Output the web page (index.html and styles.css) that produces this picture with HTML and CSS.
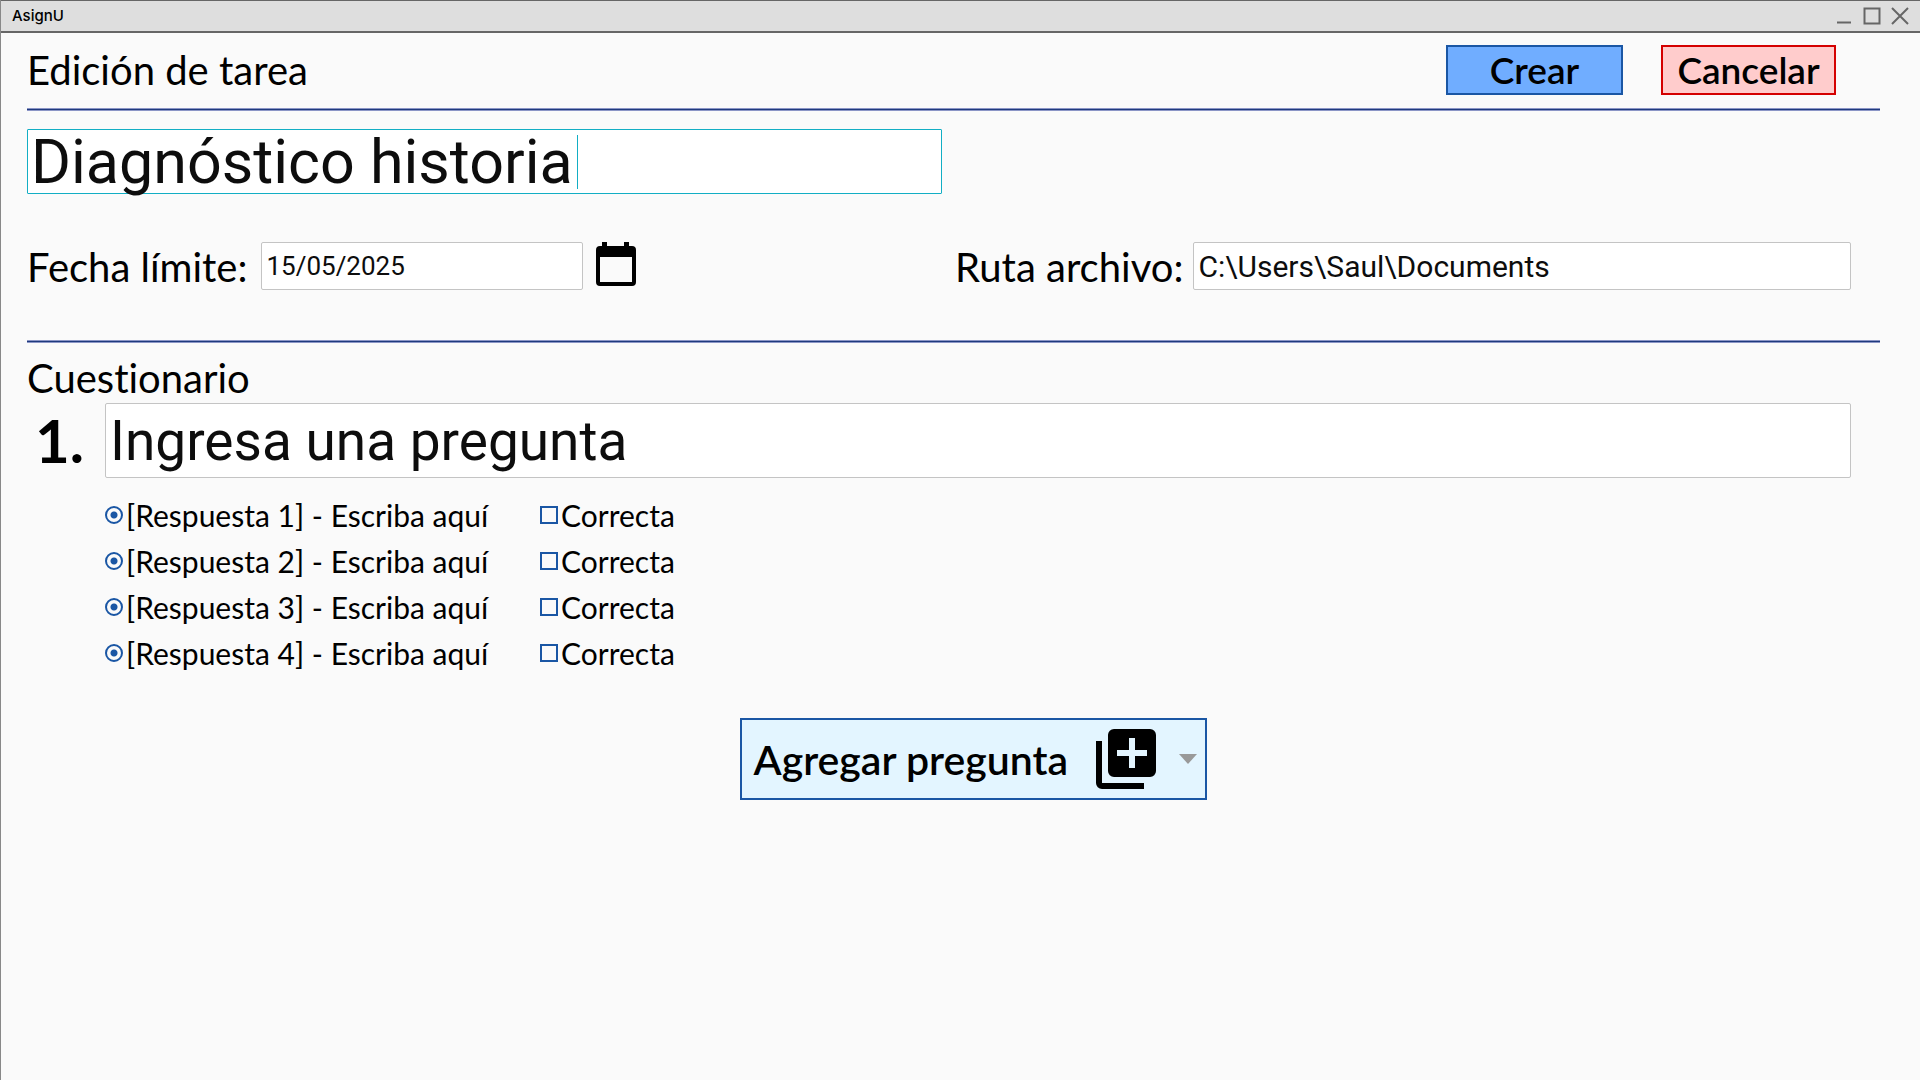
FILE: index.html
```html
<!DOCTYPE html>
<html lang="es">
<head>
<meta charset="utf-8">
<meta name="viewport" content="width=device-width, initial-scale=1">
<title>AsignU</title>
<link rel="stylesheet" href="styles.css">
</head>
<body>
<div class="window">
  <div class="titlebar">
    <span class="app-name">AsignU</span>
    <div class="window-controls">
      <button type="button" class="window-button" aria-label="Minimizar"><svg viewBox="0 0 18 18"><path d="M2 15.5h14"/></svg></button>
      <button type="button" class="window-button" aria-label="Maximizar"><svg viewBox="0 0 18 18"><path d="M1.5 1.5h15v15h-15z"/></svg></button>
      <button type="button" class="window-button" aria-label="Cerrar"><svg viewBox="0 0 18 18"><path d="M1 1l16 16M17 1L1 17"/></svg></button>
    </div>
  </div>

  <form class="editor">
    <header class="editor-header">
      <h1 class="heading">Edición de tarea</h1>
      <div class="actions">
        <button type="button" class="action create">Crear</button>
        <button type="button" class="action cancel">Cancelar</button>
      </div>
    </header>
    <hr class="rule">

    <div class="title-box">
      <input class="title-input" type="text" aria-label="Título de la tarea" value="Diagnóstico historia">
      <span class="caret"></span>
    </div>

    <div class="fields">
      <div class="field">
        <label class="heading" for="due">Fecha límite:</label>
        <input class="box date-input" id="due" type="text" value="15/05/2025">
        <button type="button" class="calendar-button" aria-label="Abrir calendario">
          <svg viewBox="0 0 40 44"><path d="M6 0h5v4h17V0h5v4h3a4 4 0 0 1 4 4v32a4 4 0 0 1-4 4H4a4 4 0 0 1-4-4V8a4 4 0 0 1 4-4h2zM4 15v25h32V15z" fill-rule="evenodd"/></svg>
        </button>
      </div>
      <div class="field">
        <label class="heading" for="path">Ruta archivo:</label>
        <input class="box path-input" id="path" type="text" value="C:\Users\Saul\Documents">
      </div>
    </div>
    <hr class="rule">

    <section class="quiz">
      <h2 class="heading">Cuestionario</h2>
      <div class="question">
        <label class="number" for="question-1">1.</label>
        <input class="box question-input" id="question-1" type="text" value="Ingresa una pregunta">
      </div>
      <div class="answers">
        <label class="option"><input class="radio" type="radio" name="answer-1" checked>[Respuesta 1] - Escriba aquí</label>
        <label class="option"><input class="check" type="checkbox">Correcta</label>
        <label class="option"><input class="radio" type="radio" name="answer-2" checked>[Respuesta 2] - Escriba aquí</label>
        <label class="option"><input class="check" type="checkbox">Correcta</label>
        <label class="option"><input class="radio" type="radio" name="answer-3" checked>[Respuesta 3] - Escriba aquí</label>
        <label class="option"><input class="check" type="checkbox">Correcta</label>
        <label class="option"><input class="radio" type="radio" name="answer-4" checked>[Respuesta 4] - Escriba aquí</label>
        <label class="option"><input class="check" type="checkbox">Correcta</label>
      </div>
      <div class="quiz-footer">
        <button type="button" class="add-question">
          <span>Agregar pregunta</span>
          <svg class="add-icon" viewBox="0 0 60 60"><path d="M0 12h6v42h42v6H6a6 6 0 0 1-6-6z"/><path fill-rule="evenodd" d="M18 0h36a6 6 0 0 1 6 6v36a6 6 0 0 1-6 6H18a6 6 0 0 1-6-6V6a6 6 0 0 1 6-6zM33 9v12H21v6h12v12h6V27h12v-6H39V9z"/></svg>
          <svg class="arrow-icon" viewBox="0 0 18 10"><path d="M0 0h18l-9 10z"/></svg>
        </button>
      </div>
    </section>
  </form>
</div>
</body>
</html>
```

FILE: styles.css
```css
* {
  box-sizing: border-box;
}

body {
  margin: 0;
  background: #fafafa;
  color: #000;
  font-family: Lato, sans-serif;
  font-variant-ligatures: none;
}

button {
  margin: 0;
  padding: 0;
  border: 0;
  background: none;
  color: inherit;
  font: inherit;
}

.window {
  min-height: 100vh;
  border-left: 1px solid #888;
}

.titlebar {
  display: flex;
  align-items: center;
  justify-content: space-between;
  height: 33px;
  padding: 0 11px;
  border-top: 1px solid #666;
  border-bottom: 2px solid #666;
  background: #dedede;
}

.app-name {
  font: 500 15px/20px Inter, sans-serif;
}

.window-controls {
  display: flex;
  gap: 10px;
}

.window-button {
  width: 18px;
  height: 18px;
}

.window-button svg {
  display: block;
  fill: none;
  stroke: #666;
  stroke-width: 2;
}

.editor {
  padding: 0 40px 40px 26px;
}

.heading {
  margin: 0;
  font-size: 40px;
  font-weight: 400;
  font-variant-ligatures: none;
  line-height: 50px;
  white-space: nowrap;
}

.editor-header {
  display: flex;
  justify-content: space-between;
  height: 75px;
  padding: 12px 44px 0 0;
}

.actions {
  display: flex;
  gap: 38px;
}

.action {
  height: 50px;
  border: 2px solid;
  font-size: 37px;
  font-weight: 600;
  line-height: 44px;
}

.create {
  width: 177px;
  border-color: #1a56a4;
  background: #70adff;
}

.cancel {
  width: 175px;
  border-color: #d40000;
  background: #fcc;
}

.rule {
  height: 3px;
  margin: 0;
  border: solid #8b95c6;
  border-width: 1px 0;
  background: #1f3a7d;
}

.title-box {
  position: relative;
  display: flex;
  align-items: center;
  width: 50%;
  max-width: 915px;
  height: 65px;
  margin-top: 18px;
  border: 1px solid #12aec4;
  border-radius: 1px;
  background: #fff;
}

.title-input {
  flex: 1;
  height: 80px;
  margin: -8px 0;
  padding: 0 3px;
  border: 0;
  outline: 0;
  background: transparent;
  color: #0d0d0d;
  font: 61px/72px Roboto, sans-serif;
}

.caret {
  position: absolute;
  top: 5px;
  left: 549px;
  width: 1px;
  height: 54px;
  background: #12aec4;
}

.fields {
  display: grid;
  grid-template-columns: 928fr 896fr;
  padding-right: 29px;
  margin: 48px 0;
}

.field {
  display: flex;
}

.box {
  min-width: 0;
  border: 1px solid #c4c4c4;
  border-radius: 2px;
  background: #fff;
  color: #0d0d0d;
  font-family: Roboto, sans-serif;
}

.date-input {
  width: 322px;
  height: 48px;
  margin: 0 13px 0 14px;
  padding: 0 4px;
  font-size: 26px;
}

.calendar-button {
  width: 40px;
  height: 44px;
}

.calendar-button svg {
  display: block;
}

.path-input {
  flex: 1;
  height: 48px;
  margin-left: 10px;
  padding: 0 4px;
  font-size: 30px;
}

.quiz {
  padding: 10px 29px 0 0;
}

.question {
  display: flex;
}

.number {
  width: 78px;
  padding-left: 8px;
  font-size: 60px;
  font-weight: 700;
  line-height: 75px;
}

.question-input {
  flex: 1;
  height: 75px;
  padding: 0 4px;
  font-size: 55px;
}

.answers {
  display: grid;
  grid-template-columns: 435px auto;
  justify-content: start;
  margin: 14px 0 42px;
  padding-left: 78px;
}

.option {
  display: flex;
  align-items: center;
  gap: 3px;
  height: 46px;
  font-size: 30px;
}

.radio,
.check {
  appearance: none;
  flex: none;
  width: 18px;
  height: 18px;
  margin: 0;
  border: 2px solid #1a56a4;
}

.radio {
  border-radius: 50%;
  background: radial-gradient(circle, #1a56a4 3px, transparent 4px);
}

.quiz-footer {
  display: flex;
  justify-content: center;
  padding-left: 68px;
}

.add-question {
  display: flex;
  align-items: center;
  width: 467px;
  height: 82px;
  padding: 0 8px 0 12px;
  border: 2px solid #1a56a4;
  background: #e3f5ff;
  font-size: 41px;
  font-weight: 600;
}

.add-icon {
  width: 60px;
  height: 60px;
  margin: 0 23px 0 auto;
}

.arrow-icon {
  width: 18px;
  height: 10px;
  fill: #999;
}
```
